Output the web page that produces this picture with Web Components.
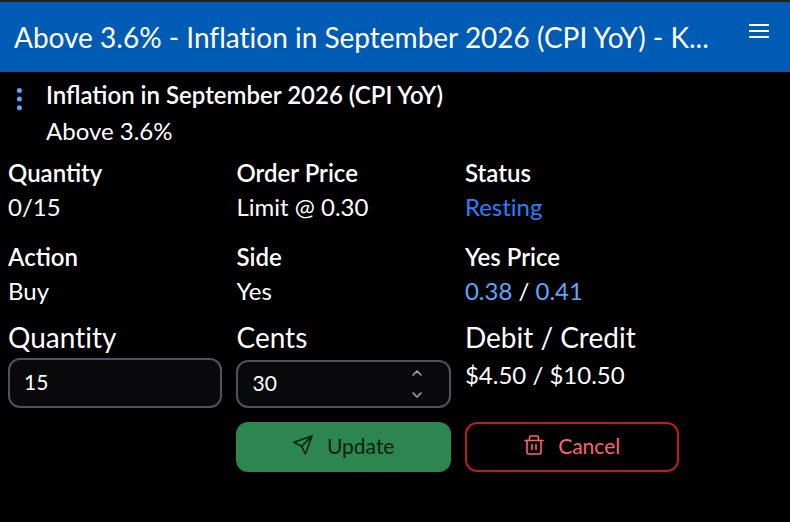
<!DOCTYPE html>
<html lang="en">
<head>
<meta charset="utf-8">
<meta name="viewport" content="width=device-width, initial-scale=1">
<title>Orders</title>
<style>
:root {
  --c-bar: #005bb5;
  --c-strip: #202124;
  --c-link: #60a5fa;
  --c-status: #2b7fff;
  --c-field: #09090b;
  --c-border: #52525c;
  --c-muted: #a1a1aa;
  --c-green: #2d864f;
  --c-green-text: #03200f;
  --c-red: #bd1c1c;
  --c-red-text: #ff6467;
  --gap: 14px;
  --radius: 12px;
}

body {
  background: #000;
  color: #fff;
  font-family: Lato, sans-serif;
  font-size: 24px;
  font-variant-ligatures: no-common-ligatures;
  line-height: 34px;
  margin: 0;
}
</style>
</head>
<body>
<app-bar>Above 3.6% - Inflation in September 2026 (CPI YoY) - K...</app-bar>

<order-card>
  <market-title slot="title">
    Inflation in September 2026 (CPI YoY)
    <span slot="sub">Above 3.6%</span>
  </market-title>

  <order-fact label="Quantity">0/15</order-fact>
  <order-fact label="Order Price">Limit @ 0.30</order-fact>
  <order-fact label="Status" tone="status">Resting</order-fact>
  <order-fact label="Action">Buy</order-fact>
  <order-fact label="Side">Yes</order-fact>
  <order-fact label="Yes Price"><price-link>0.38</price-link> / <price-link>0.41</price-link></order-fact>

  <order-field slot="form" label="Quantity" value="15"></order-field>
  <order-field slot="form" label="Cents" value="30" stepper></order-field>
  <order-total slot="form" label="Debit / Credit">$4.50 / $10.50</order-total>

  <order-button slot="actions" kind="update">Update</order-button>
  <order-button slot="actions" kind="cancel">Cancel</order-button>
</order-card>

<script>
(function() {
  const render = (el, html) => {
    el.attachShadow({ mode: 'open' }).innerHTML = html;
    return el.shadowRoot;
  };

  //=== Top bar
  class AppBar extends HTMLElement {
    constructor() {
      super();
      render(this, `
<style>
:host {
  align-items: center;
  background: var(--c-bar);
  border-top: 2px solid var(--c-strip);
  box-sizing: border-box;
  display: flex;
  gap: 24px;
  padding: 14px 20px 14px 14px;
}

h1 {
  flex: 1;
  font-size: 28px;
  font-weight: 400;
  line-height: 42px;
  margin: 0;
  min-width: 0;
  overflow: hidden;
  text-overflow: ellipsis;
  white-space: nowrap;
}

button {
  align-self: flex-start;
  background: none;
  border: 0;
  color: inherit;
  display: flex;
  padding: 4px 0;
}
</style>
<h1><slot></slot></h1>
<button type="button" aria-label="Menu">
  <svg width="22" height="22" viewBox="0 0 22 22" fill="none" stroke="currentColor" stroke-width="2">
    <path d="M1 5h20M1 11h20M1 17h20"/>
  </svg>
</button>
`);
    }
  }

  //=== Card
  class OrderCard extends HTMLElement {
    constructor() {
      super();
      render(this, `
<style>
:host {
  display: block;
  padding: 6px 14% 8px 8px;
}

.grid {
  column-gap: var(--gap);
  display: grid;
  grid-template-columns: repeat(3, minmax(0, 1fr));
}

.facts {
  padding-top: 6px;
  row-gap: 16px;
}

.form {
  padding-top: 8px;
}

.actions {
  padding-top: var(--gap);
}

.actions::before {
  content: '';
}
</style>
<slot name="title"></slot>
<div class="grid facts"><slot></slot></div>
<div class="grid form"><slot name="form"></slot></div>
<div class="grid actions"><slot name="actions"></slot></div>
`);
    }
  }

  //=== Market name with its row menu
  class MarketTitle extends HTMLElement {
    constructor() {
      super();
      render(this, `
<style>
:host {
  display: flex;
  gap: 16px;
}

button {
  align-self: flex-start;
  background: none;
  border: 0;
  color: var(--c-link);
  display: flex;
  padding: 8px 0;
}

h2 {
  font-size: inherit;
  font-variant-ligatures: normal;
  font-weight: 600;
  margin: 0;
}

p {
  line-height: 38px;
  margin: 0;
}
</style>
<button type="button" aria-label="Order menu">
  <svg width="22" height="26" viewBox="0 0 22 26" fill="currentColor">
    <circle cx="11.4" cy="4.4" r="2.5"/>
    <circle cx="11.4" cy="13" r="2.5"/>
    <circle cx="11.4" cy="21.7" r="2.5"/>
  </svg>
</button>
<div>
  <h2><slot></slot></h2>
  <p><slot name="sub"></slot></p>
</div>
`);
    }
  }

  //=== Label and value
  class OrderFact extends HTMLElement {
    constructor() {
      super();
      render(this, `
<style>
:host {
  display: block;
}

:host([tone='status']) .value {
  color: var(--c-status);
}

.label {
  font-variant-ligatures: normal;
  font-weight: 600;
}
</style>
<div class="label">${this.getAttribute('label')}</div>
<div class="value"><slot></slot></div>
`);
    }
  }

  class PriceLink extends HTMLElement {
    constructor() {
      super();
      render(this, `
<style>
:host {
  display: inline;
}

a {
  color: var(--c-link);
  text-decoration: none;
}
</style>
<a href="#"><slot></slot></a>`);
    }
  }

  //=== Form fields
  const chevron = d => `
<svg width="12" height="8" viewBox="0 0 12 8" fill="none" stroke="currentColor" stroke-width="1.6" stroke-linecap="round" stroke-linejoin="round">
  <path d="${d}"/>
</svg>`;

  class OrderField extends HTMLElement {
    constructor() {
      super();
      const stepper = this.hasAttribute('stepper');
      const root = render(this, `
<style>
:host {
  display: flex;
  flex-direction: column;
}

label {
  font-size: 28px;
  line-height: 42px;
}

.box {
  background: var(--c-field);
  border: 2px solid var(--c-border);
  border-radius: var(--radius);
  box-sizing: border-box;
  display: flex;
  height: 50px;
}

:host([stepper]) .box {
  height: 48px;
  margin-top: 2px;
}

input {
  background: none;
  border: 0;
  color: inherit;
  flex: 1;
  font: inherit;
  font-size: 21px;
  line-height: 28px;
  min-width: 0;
  outline: 0;
  padding: 0 14px 2px;
}

.steps {
  display: flex;
  flex-direction: column;
  padding-right: 20px;
}

button {
  align-items: center;
  background: none;
  border: 0;
  color: var(--c-muted);
  display: flex;
  flex: 1;
  padding: 0 6px;
}
</style>
<label for="input">${this.getAttribute('label')}</label>
<div class="box">
  <input id="input" type="text" inputmode="numeric" value="${this.getAttribute('value')}">
  ${stepper ? `
  <div class="steps">
    <button type="button" aria-label="Increase">${chevron('M2 6l4-4 4 4')}</button>
    <button type="button" aria-label="Decrease">${chevron('M2 2l4 4 4-4')}</button>
  </div>` : ''}
</div>
`);

      if (stepper) {
        const input = root.querySelector('input');
        const [up, down] = root.querySelectorAll('button');
        const step = by => {
          input.value = Math.max(0, (parseInt(input.value, 10) || 0) + by);
        };
        up.addEventListener('click', () => step(1));
        down.addEventListener('click', () => step(-1));
      }
    }
  }

  class OrderTotal extends HTMLElement {
    constructor() {
      super();
      render(this, `
<style>
:host {
  display: block;
}

.label {
  font-size: 28px;
  line-height: 42px;
}
</style>
<div class="label">${this.getAttribute('label')}</div>
<div><slot></slot></div>
`);
    }
  }

  //=== Buttons
  const icons = {
    update: `
<path d="M19 1L1 7.2l7.6 4.2L12.4 19z"/>
<path d="M19 1L8.6 11.4"/>`,
    cancel: `
<path d="M1 5.5h18"/>
<path d="M3 5.5v12a1.5 1.5 0 0 0 1.5 1.5h11a1.5 1.5 0 0 0 1.5-1.5v-12"/>
<path d="M5.5 5.5v-3A1.5 1.5 0 0 1 7 1h6a1.5 1.5 0 0 1 1.5 1.5v3"/>
<path d="M8 9.5v5M12 9.5v5"/>`
  };

  class OrderButton extends HTMLElement {
    constructor() {
      super();
      const kind = this.getAttribute('kind');
      render(this, `
<style>
:host {
  display: block;
}

button {
  align-items: center;
  background: none;
  border: 2px solid var(--c-red);
  border-radius: var(--radius);
  box-sizing: border-box;
  color: var(--c-red-text);
  display: flex;
  font: inherit;
  font-size: 21px;
  gap: 14px;
  height: 50px;
  justify-content: center;
  line-height: 28px;
  padding: 0 14px 2px;
  width: 100%;
}

:host([kind='update']) button {
  background: var(--c-green);
  border-color: var(--c-green);
  color: var(--c-green-text);
}

svg {
  padding-bottom: 2px;
}
</style>
<button type="button">
  <svg width="20" height="20" viewBox="0 0 20 20" fill="none" stroke="currentColor" stroke-width="1.6" stroke-linecap="round" stroke-linejoin="round">${icons[kind]}</svg>
  <slot></slot>
</button>
`);
    }
  }

  window.customElements.define('app-bar', AppBar);
  window.customElements.define('order-card', OrderCard);
  window.customElements.define('market-title', MarketTitle);
  window.customElements.define('order-fact', OrderFact);
  window.customElements.define('price-link', PriceLink);
  window.customElements.define('order-field', OrderField);
  window.customElements.define('order-total', OrderTotal);
  window.customElements.define('order-button', OrderButton);
})();
</script>
</body>
</html>
